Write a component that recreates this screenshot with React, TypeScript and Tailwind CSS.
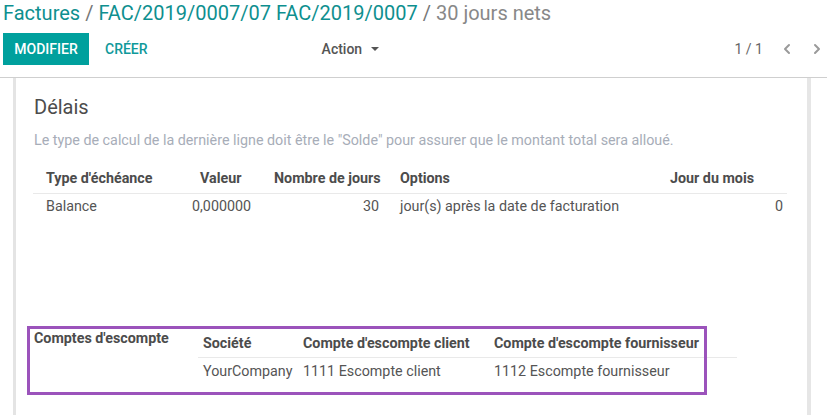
import { ChevronLeft, ChevronRight } from 'lucide-react';

const termCols = [
  { label: "Type d'échéance", head: 'pl-[13px]' },
  { label: 'Valeur', head: 'pl-[20px]' },
  { label: 'Nombre de jours', head: 'pl-[12px]' },
  { label: 'Options', head: 'pl-[12px]' },
  { label: 'Jour du mois', head: 'pl-[12px]' },
];

export default function App() {
  return (
    <div className="w-[827px] h-[415px] overflow-hidden bg-white text-[#4c4c4c]" style={{ fontFamily: 'Roboto, "Noto Sans", sans-serif' }}>
      {/* Barre de contrôle */}
      <div className="h-[78px] border-b border-[#cfcfcf] px-[3px]">
        <div className="flex items-center gap-[5px] text-[20px] leading-[26px]">
          <span className="text-[#0e8f8f]">Factures</span>
          <span className="text-[#777]">/</span>
          <span className="text-[#0e8f8f]">FAC/2019/0007/07 FAC/2019/0007</span>
          <span className="text-[#777]">/</span>
          <span className="text-[#888]">30 jours nets</span>
        </div>
        <div className="flex items-center mt-[7px] h-[32px]">
          <button className="h-[32px] w-[86px] bg-[#00a09d] text-white text-[14px] font-medium">MODIFIER</button>
          <button className="ml-[16px] text-[#10999a] text-[14px] font-medium">CRÉER</button>
          <button className="ml-[174px] flex items-center gap-[9px] text-[14px] font-medium text-[#555]">
            Action
            <span className="w-0 h-0 border-l-[4px] border-r-[4px] border-t-[4px] border-l-transparent border-r-transparent border-t-[#555]" />
          </button>
          <div className="ml-auto flex items-center text-[14px] text-[#666]">
            <span className="mr-[16px]">1 / 1</span>
            <ChevronLeft size={16} strokeWidth={3} className="text-[#9a9a9a] mr-[14px]" />
            <ChevronRight size={16} strokeWidth={3} className="text-[#9a9a9a] mr-[-1px]" />
          </div>
        </div>
      </div>

      {/* Feuille */}
      <div className="flex h-[337px]">
        <div className="ml-[13px] w-[3px] bg-[#e4e4e4]" />
        <div className="relative w-[791px] pl-[18px]">
          <h2 className="text-[20px] leading-[24px] mt-[17px] text-[#4c4c4c]">Délais</h2>
          <p className="mt-[12px] text-[14.3px] leading-[18px] text-[#a7adb8]">
            Le type de calcul de la dernière ligne doit être le "Solde" pour assurer que le montant total sera alloué.
          </p>
          <div className="mt-[16px] ml-[-1px] w-[754px] text-[14.3px]">
            <div className="grid grid-cols-[147px_82px_126px_270px_129px] h-[29px] items-center font-bold border-b border-[#e9e9e9] text-[#4c4c4c]">
              {termCols.map((c) => (
                <div key={c.label} className={c.head}>{c.label}</div>
              ))}
            </div>
            <div className="grid grid-cols-[147px_82px_126px_270px_129px] h-[26px] items-center text-[#555]">
              <div className="pl-[13px]">Balance</div>
              <div className="pl-[12px]">0,000000</div>
              <div className="text-right pr-[9px]">30</div>
              <div className="pl-[12px]">jour(s) après la date de facturation</div>
              <div className="text-right pr-[4px]">0</div>
            </div>
          </div>

          <div className="flex mt-[107px]">
            <div className="w-[164px] text-[14.3px] font-bold text-[#4c4c4c] leading-[20px] pt-[1px]">Comptes d'escompte</div>
            <div className="w-[539px] text-[14.3px] mt-[3px]">
              <div className="grid grid-cols-[100px_191px_248px] h-[28px] items-center font-bold border-b border-[#e9e9e9]">
                <div className="pl-[5px]">Société</div>
                <div className="pl-[5px]">Compte d'escompte client</div>
                <div className="pl-[5px]">Compte d'escompte fournisseur</div>
              </div>
              <div className="grid grid-cols-[100px_191px_248px] h-[27px] items-center text-[#555]">
                <div className="pl-[5px]">YourCompany</div>
                <div className="pl-[5px]">1111 Escompte client</div>
                <div className="pl-[5px]">1112 Escompte fournisseur</div>
              </div>
            </div>
          </div>

          {/* Cadre d'annotation */}
          <div className="absolute left-[11px] top-[248px] w-[680px] h-[69px] border-[3px] border-[#9b53bb] pointer-events-none" />
        </div>
        <div className="w-[4px] bg-[#e6e6e6]" />
      </div>
    </div>
  );
}
